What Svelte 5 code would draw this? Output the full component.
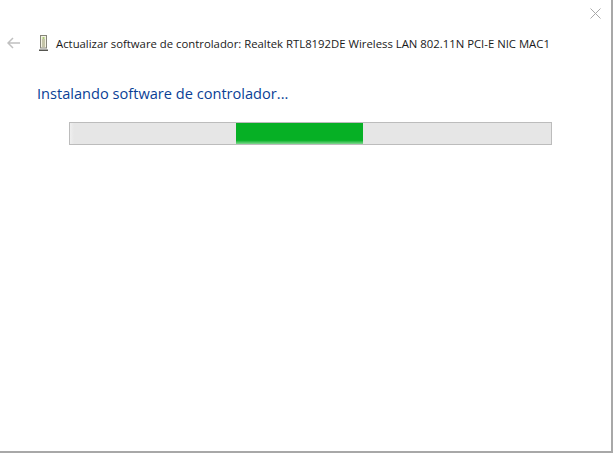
<script>
  let title = 'Actualizar software de controlador: Realtek RTL8192DE Wireless LAN 802.11N PCI-E NIC MAC1';
</script>

<div class="dialog">
  <div class="topbar">
    <svg class="close" width="11" height="11" viewBox="0 0 11 11">
      <path d="M0.5 0.5 L10.5 10.5 M10.5 0.5 L0.5 10.5" stroke="#a8a8a8" stroke-width="1" fill="none" />
    </svg>
  </div>
  <div class="header">
    <svg class="back" width="14" height="12" viewBox="0 0 14 12">
      <path d="M6 1 L1 6 L6 11 M1 6 L13 6" stroke="#c0c0c0" stroke-width="1.5" fill="none" />
    </svg>
    <svg class="device" width="11" height="17" viewBox="0 0 11 17">
      <rect x="2.5" y="0.5" width="6" height="12.5" fill="#f4f2e2" stroke="#85857a" />
      <rect x="4" y="4" width="3" height="8" fill="#c4c4a8" />
      <rect x="4.5" y="2" width="2" height="2" fill="#a9cc78" />
      <rect x="1" y="14.5" width="9" height="1.5" fill="#55554f" />
    </svg>
    <span class="title">{title}</span>
  </div>
  <h1>Instalando software de controlador...</h1>
  <div class="progress">
    <div class="bar"></div>
  </div>
</div>

<style>
  :global(body) {
    margin: 0;
    background: #fff;
  }

  .dialog {
    box-sizing: border-box;
    width: 613px;
    height: 453px;
    background: #fff;
    border-right: 2px solid #a8a8a8;
    border-bottom: 2px solid #a8a8a8;
    font-family: "Open Sans", "Liberation Sans", sans-serif;
  }

  .topbar {
    display: flex;
    justify-content: flex-end;
    padding: 8px 10px 0 0;
    height: 28px;
    box-sizing: border-box;
  }

  .header {
    display: flex;
    align-items: center;
    height: 30px;
    padding-left: 7px;
  }

  .back {
    margin-right: 17px;
  }

  .device {
    margin-right: 7px;
  }

  .title {
    font-size: 11.34px;
    color: #1a1a1a;
    white-space: nowrap;
  }

  h1 {
    margin: 25px 0 0 37px;
    font-size: 14.6px;
    font-weight: 400;
    line-height: 20px;
    color: #0a3f96;
  }

  .progress {
    box-sizing: border-box;
    width: 483px;
    height: 23px;
    margin: 19px 0 0 69px;
    padding-left: 166px;
    background: linear-gradient(to right, #efefef 0, #e6e6e6 4px);
    border: 1px solid #bcbcbc;
  }

  .bar {
    width: 127px;
    height: 100%;
    background: linear-gradient(to bottom, #06b025 0, #06b025 82%, #7fd88f 100%);
  }
</style>
